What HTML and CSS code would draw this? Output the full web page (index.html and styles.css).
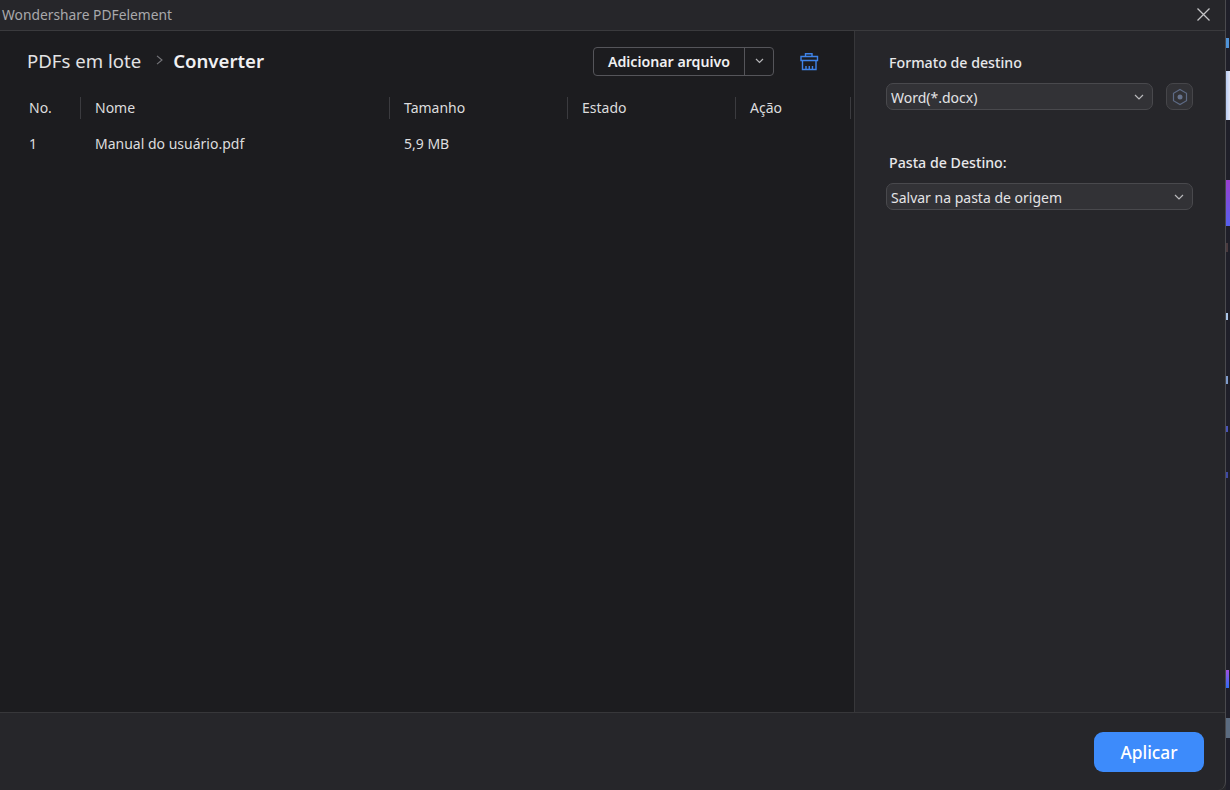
FILE: index.html
```html
<!DOCTYPE html>
<html lang="pt">
<head>
<meta charset="utf-8">
<title>Wondershare PDFelement</title>
<link rel="stylesheet" href="styles.css">
</head>
<body>
<div class="desktop">
  <div class="window">
    <header class="titlebar">
      <span class="app-name">Wondershare PDFelement</span>
      <svg class="close" width="13" height="13" viewBox="0 0 13 13"><path d="M.5.5l12 12M12.500.5l-12 12" stroke="#c4c4c6" stroke-width="1.300" fill="none"/></svg>
    </header>
    <div class="main">
      <section class="list">
        <div class="toolbar">
          <div class="crumbs">
            <span class="crumb">PDFs em lote</span>
            <svg class="crumb-sep" width="8" height="10" viewBox="0 0 8 10"><path d="M1 .8L6 5 1 9.200" stroke="#77777c" stroke-width="1.100" fill="none"/></svg>
            <span class="crumb-current">Converter</span>
          </div>
          <div class="split-btn">
            <span class="split-label">Adicionar arquivo</span>
            <span class="split-arrow"><svg width="9" height="6" viewBox="0 0 9 6"><path d="M1 1l3.500 3.500L8 1" stroke="#b5b5b8" stroke-width="1.200" fill="none"/></svg></span>
          </div>
          <svg class="clean" width="19" height="19" viewBox="0 0 19 19" fill="none" stroke="#3f83e8" stroke-width="1.400"><path d="M5.500 4.500V1.700h6.500v2.800M1 8.500V4.500h16.500v4zM2.500 8.500v9h13.500v-9M6 17.500v-3.500M9.250 17.500v-3.500M12.500 17.500v-3.500"/></svg>
        </div>
        <div class="table-head">
          <div class="th col-no">No.</div>
          <div class="th col-name">Nome</div>
          <div class="th col-size">Tamanho</div>
          <div class="th col-state">Estado</div>
          <div class="th col-action">Ação</div>
        </div>
        <div class="table-row">
          <div class="td col-no">1</div>
          <div class="td col-name">Manual do usuário.pdf</div>
          <div class="td col-size">5,9 MB</div>
        </div>
      </section>
      <aside class="settings">
        <div class="field-label">Formato de destino</div>
        <div class="format-row">
          <div class="select select-format"><span class="select-text">Word(*.docx)</span><svg width="10" height="6" viewBox="0 0 10 6"><path d="M1 1l4 4 4-4" stroke="#b9b9bc" stroke-width="1.200" fill="none"/></svg></div>
          <div class="gear"><svg width="16" height="18" viewBox="0 0 16 18" fill="none"><path d="M8 1.500l6.500 3.750v7.500L8 16.500l-6.500-3.750v-7.500z" stroke="#5d6a85" stroke-width="1.200"/><circle cx="8" cy="9" r="2.500" fill="#66728c"/></svg></div>
        </div>
        <div class="field-label label-folder">Pasta de Destino:</div>
        <div class="select"><span class="select-text">Salvar na pasta de origem</span><svg width="10" height="6" viewBox="0 0 10 6"><path d="M1 1l4 4 4-4" stroke="#b9b9bc" stroke-width="1.200" fill="none"/></svg></div>
      </aside>
    </div>
    <footer class="footer"><div class="apply">Aplicar</div></footer>
  </div>
  <div class="backdrop">
    <div class="bit bit-icon"></div>
    <div class="bit bit-photo"></div>
    <div class="bit bit-purple"></div>
    <div class="bit bit-ring"></div>
    <div class="bit bit-text"></div>
    <div class="bit bit-orange"></div>
    <div class="bit bit-link"></div>
    <div class="bit bit-link2"></div>
    <div class="bit bit-chip"></div>
    <div class="bit bit-slate"></div>
  </div>
</div>
</body>
</html>
```
FILE: styles.css
```css
html, body { margin: 0; height: 100%; background: #26262a; overflow: hidden; }
.desktop { display: flex; width: 1230px; height: 790px; font-family: "Noto Sans", "Open Sans", sans-serif; color: #e6e6e8; }
.window { width: 1226px; height: 790px; display: flex; flex-direction: column; background: #26262a; border-right: 1px solid #4a4a4e; box-sizing: border-box; border-bottom-right-radius: 8px; }
.titlebar { height: 30px; flex: none; display: flex; align-items: center; justify-content: space-between; padding: 0 15px 2px 2px; box-sizing: border-box; height: 31px; border-bottom: 1px solid #3a3a3d; }
.app-name { font-size: 13.800px; color: #a9a9ac; }
.main { flex: 1; display: flex; min-height: 0; }
.list { width: 854px; flex: none; background: #1c1c1f; border-right: 1px solid #37373a; }
.toolbar { display: flex; align-items: center; height: 60px; padding: 0 35px 0 27px; }
.crumbs { flex: 1; display: flex; align-items: center; padding-bottom: 2px; }
.crumb { font-size: 18.600px; color: #e2e2e4; }
.crumb-sep { margin: 0 9px 0 15px; }
.crumb-current { font-size: 18.600px; font-weight: 600; color: #f0f0f2; }
.split-btn { display: flex; height: 27px; border: 1px solid #55555a; border-radius: 4px; margin-right: 26px; }
.split-label { width: 151px; box-sizing: border-box; display: flex; align-items: center; justify-content: center; font-size: 14.200px; font-weight: 600; color: #f0f0f2; border-right: 1px solid #55555a; }
.split-arrow { width: 28px; display: flex; align-items: center; justify-content: center; }
.table-head, .table-row { display: flex; align-items: center; font-size: 14px; color: #dcdcde; }
.table-head { height: 22px; margin-top: 6px; }
.table-row { height: 22px; margin-top: 13px; }
.th { height: 22px; line-height: 22px; border-right: 1px solid #3b3b3f; box-sizing: border-box; }
.col-no { width: 81px; padding-left: 29px; box-sizing: border-box; }
.col-name { width: 309px; padding-left: 14px; box-sizing: border-box; }
.col-size { width: 178px; padding-left: 14px; box-sizing: border-box; }
.col-state { width: 168px; padding-left: 14px; box-sizing: border-box; }
.col-action { width: 115px; padding-left: 14px; box-sizing: border-box; }
.settings { flex: 1; padding: 22px 32px 0 31px; }
.field-label { font-size: 14.200px; font-weight: 500; color: #e8e8ea; margin-left: 3px; height: 20px; line-height: 20px; }
.label-folder { margin-top: 43px; }
.format-row { display: flex; gap: 13px; align-items: center; }
.select { height: 27px; margin-top: 10px; background: #323236; border: 1px solid #49494d; border-radius: 7px; display: flex; align-items: center; justify-content: space-between; padding: 0 8px 0 4px; font-size: 14px; color: #e4e4e6; box-sizing: border-box; }
.select-text { padding-top: 2px; }
.select-format { flex: 1; }
.gear { width: 27px; height: 27px; margin-top: 10px; border: 1px solid #46464a; border-radius: 7px; background: #323236; box-sizing: border-box; display: flex; align-items: center; justify-content: center; }
.footer { height: 78px; flex: none; border-top: 1px solid #37373a; display: flex; justify-content: flex-end; padding: 19px 21px 0 0; box-sizing: border-box; }
.apply { width: 110px; height: 40px; background: #3d8bfb; border-radius: 9px; color: #fff; font-size: 17.300px; font-weight: 500; display: flex; align-items: center; justify-content: center; }
.backdrop { width: 4px; height: 790px; background: #1f1f29; display: flex; flex-direction: column; }
.bit { flex: none; }
.bit-icon { height: 10px; margin-top: 38px; width: 3px; background: #4f93d8; }
.bit-photo { height: 49px; margin-top: 23px; background: linear-gradient(90deg, #b9cdf5, #e4e6f5); }
.bit-purple { height: 46px; margin-top: 60px; background: linear-gradient(#9a3fd0, #5560ee); }
.bit-ring { height: 9px; margin-top: 17px; width: 2px; background: #4a3a3e; }
.bit-text { height: 7px; margin-top: 61px; width: 2px; background: #a9c4e6; }
.bit-orange { height: 8px; margin-top: 56px; width: 2px; background: #7f9ccc; }
.bit-link { height: 6px; margin-top: 42px; width: 2px; background: #4a55b8; }
.bit-link2 { height: 6px; margin-top: 40px; width: 2px; background: #3f4aa5; }
.bit-chip { height: 18px; margin-top: 192px; width: 3px; background: linear-gradient(#a050e0, #2f6cf5); }
.bit-slate { height: 20px; margin-top: 30px; background: #5b6b80; }
```
